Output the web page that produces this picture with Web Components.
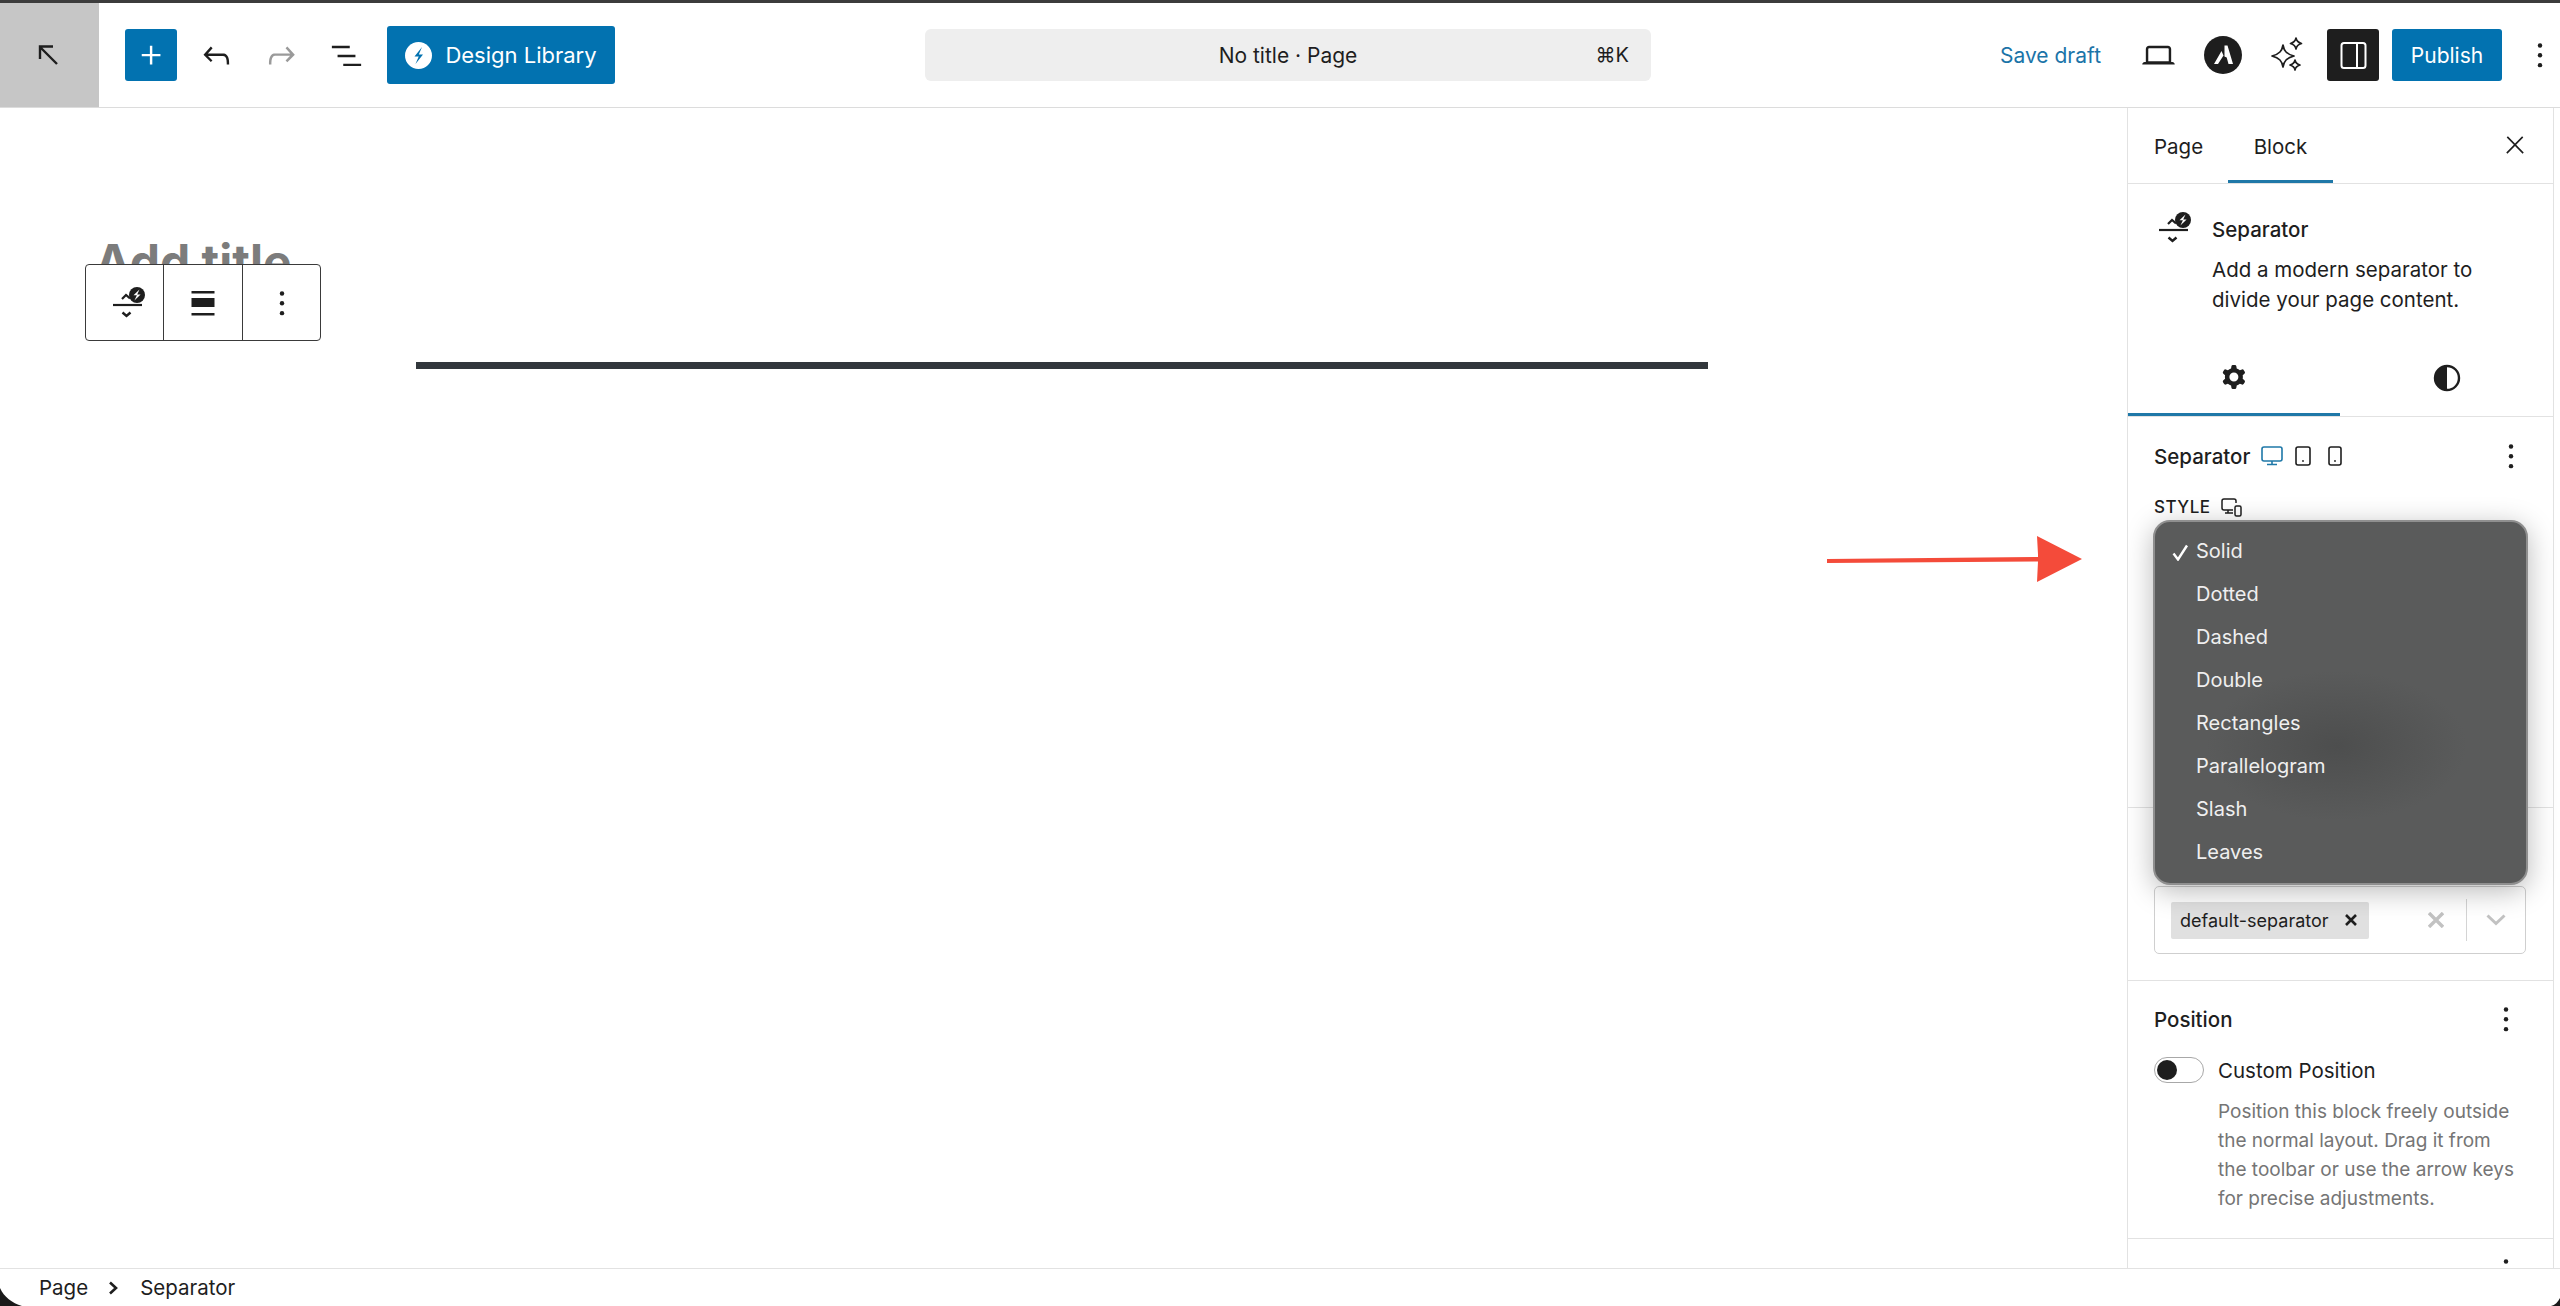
<!DOCTYPE html>
<html lang="en">
<head>
<meta charset="utf-8">
<title>No title - Page</title>
<style>
  html, body { margin: 0; padding: 0; background: #fff; }
  body { font-family: Inter, "Liberation Sans", sans-serif; color: #1e1e1e; }
</style>
</head>
<body>
<wp-editor></wp-editor>

<script>
/* ---------- iconos compartidos ---------- */
const PATHS = {
  plus: 'M11 12.5V17.5H12.5V12.5H17.5V11H12.5V6H11V11H6V12.5H11Z',
  undo: 'M18.3 11.7c-.6-.6-1.4-.9-2.3-.9H6.7l2.9-3.3-1.1-1-4.5 5L8.5 16l1-1-2.7-2.7H16c.5 0 .9.2 1.3.5 1 1 1 3.4 1 4.5v.3h1.5v-.2c0-1.5 0-4.3-1.5-5.7z',
  redo: 'M15.6 6.5l-1.1 1 2.9 3.3H8c-.9 0-1.7.3-2.3.9-1.4 1.5-1.4 4.2-1.4 5.6v.2h1.5v-.3c0-1.1 0-3.5 1-4.5.3-.3.7-.5 1.3-.5h9.2L14.5 15l1.1 1.1 4.6-4.6-4.6-5z',
  list: 'M3 6h11v1.5H3V6Zm3.5 5.5h11V13h-11v-1.5ZM21 17H10v1.5h11V17Z',
  close: 'M13 11.8l6.1-6.3-1-1-6.1 6.2-6.1-6.2-1 1 6.1 6.3-6.5 6.7 1 1 6.5-6.6 6.5 6.6 1-1z',
  laptop: 'M20.5 16h-.7V8c0-1.1-.9-2-2-2H6.2c-1.1 0-2 .9-2 2v8h-.7c-.8 0-1.5.7-1.5 1.5h20c0-.8-.7-1.5-1.5-1.5zM5.7 8c0-.3.2-.5.5-.5h11.6c.3 0 .5.2.5.5v7.6H5.7V8z',
  cog: 'M10.289 4.836A1 1 0 0 1 11.275 4h1.306a1 1 0 0 1 .987.836l.244 1.466c.787.26 1.503.679 2.108 1.218l1.393-.522a1 1 0 0 1 1.216.437l.653 1.13a1 1 0 0 1-.23 1.273l-1.148.944a6.025 6.025 0 0 1 0 2.435l1.149.946a1 1 0 0 1 .23 1.272l-.653 1.13a1 1 0 0 1-1.216.437l-1.394-.522c-.605.54-1.32.958-2.108 1.218l-.244 1.466a1 1 0 0 1-.987.836h-1.306a1 1 0 0 1-.986-.836l-.244-1.466a5.995 5.995 0 0 1-2.108-1.218l-1.394.522a1 1 0 0 1-1.217-.436l-.653-1.131a1 1 0 0 1 .23-1.272l1.149-.946a6.026 6.026 0 0 1 0-2.435l-1.148-.944a1 1 0 0 1-.23-1.272l.653-1.131a1 1 0 0 1 1.217-.437l1.393.522a5.994 5.994 0 0 1 2.108-1.218l.244-1.466ZM14.929 12a3 3 0 1 1-6 0 3 3 0 0 1 6 0Z'
};

const svgIcon = (name, size = 39, color = 'currentColor') =>
  `<svg width="${size}" height="${size}" viewBox="0 0 24 24" fill="${color}" fill-rule="evenodd" style="display:block"><path d="${PATHS[name]}"/></svg>`;

const dots = (size = 38) =>
  `<svg width="${size}" height="${size}" viewBox="0 0 24 24" fill="currentColor" style="display:block"><circle cx="12" cy="6" r="1.4"/><circle cx="12" cy="12.2" r="1.4"/><circle cx="12" cy="18.4" r="1.4"/></svg>`;

/* icono del bloque separador con el logo de stackable */
const separatorIcon = `<svg width="36" height="33" viewBox="0 0 36 33" fill="none" style="display:block">
  <path d="M1 19h29" stroke="#1e1e1e" stroke-width="2.2"/>
  <path d="M10 13l4-4 4 3.4" stroke="#1e1e1e" stroke-width="2.2"/>
  <path d="M10.500 26.500l4 3.500 4-3.500" stroke="#1e1e1e" stroke-width="2.400"/>
  <circle cx="25" cy="9" r="8" fill="#1e1e1e"/>
  <path d="M27.500 3.500l-6 5.800h3.400l-2.500 5.200 6.200-6h-3.400z" fill="#fff"/>
</svg>`;

/* ---------- boton cuadrado de la barra superior ---------- */
class IconButton extends HTMLElement {
  constructor() {
    super();
    this.attachShadow({ mode: 'open' });
  }

  connectedCallback() {
    this.shadowRoot.innerHTML = `
<style>
  :host {
    display: flex;
    align-items: center;
    justify-content: center;
    flex: 0 0 auto;
    width: 52px;
    height: 52px;
    border-radius: 3px;
    color: #1e1e1e;
    box-sizing: border-box;
  }
  :host([variant="primary"]) { background: #0272b0; color: #fff; }
  :host([variant="dark"]) { background: #1e1e1e; color: #fff; }
  :host([variant="muted"]) { color: #9a9a9a; }
  :host([narrow]) { width: 38px; }
</style>
<slot></slot>`;
  }
}
customElements.define('icon-button', IconButton);

/* ---------- boton azul con texto ---------- */
class TextButton extends HTMLElement {
  constructor() {
    super();
    this.attachShadow({ mode: 'open' });
  }

  connectedCallback() {
    this.shadowRoot.innerHTML = `
<style>
  :host {
    display: flex;
    align-items: center;
    justify-content: center;
    flex: 0 0 auto;
    gap: 13px;
    height: 52px;
    background: #0272b0;
    color: #fff;
    border-radius: 3px;
    font-size: 21px;
    box-sizing: border-box;
  }
</style>
<slot></slot>`;
  }
}
customElements.define('text-button', TextButton);

/* ---------- barra superior ---------- */
class TopBar extends HTMLElement {
  constructor() {
    super();
    this.attachShadow({ mode: 'open' });
  }

  connectedCallback() {
    this.shadowRoot.innerHTML = `
<style>
  :host {
    display: grid;
    grid-template-columns: 925px 726px 1fr;
    align-items: center;
    flex: 0 0 105px;
    height: 105px;
    background: #fff;
    border-bottom: 1px solid #dcdcdc;
    box-sizing: border-box;
    font-family: Inter, "Liberation Sans", sans-serif;
    font-size: 21px;
    color: #1e1e1e;
  }
  .left, .right { display: flex; align-items: center; gap: 13px; height: 100%; }
  .back {
    width: 99px;
    height: 100%;
    margin-right: 13px;
    background: #c6c6c6;
    display: flex;
    align-items: center;
    justify-content: center;
  }
  .library { width: 228px; height: 58px; margin-left: 2px; font-size: 22px; }
  .command {
    display: grid;
    grid-template-columns: 1fr auto 1fr;
    align-items: center;
    height: 52px;
    background: #eeeeee;
    border-radius: 6px;
    padding: 0 22px;
    font-size: 21px;
  }
  .command .kbd { justify-self: end; font-size: 20px; }
  .right { justify-content: flex-end; }
  .save { color: #1b74a8; margin-right: 18px; }
  .publish { width: 110px; }
  .more { margin-left: 6px; margin-right: 1px; }
</style>
<div class="left">
  <div class="back">
    <svg width="26" height="26" viewBox="0 0 26 26" fill="none" stroke="#1e1e1e" stroke-width="2.400" style="margin-left:-2px"><path d="M21 22L4 5M4 17V4.500h13"/></svg>
  </div>
  <icon-button variant="primary">${svgIcon('plus')}</icon-button>
  <icon-button>${svgIcon('undo')}</icon-button>
  <icon-button variant="muted">${svgIcon('redo')}</icon-button>
  <icon-button>${svgIcon('list')}</icon-button>
  <text-button class="library">
    <svg width="27" height="27" viewBox="0 0 27 27"><circle cx="13.500" cy="13.500" r="13.500" fill="#fff"/><path d="M17 5l-7.500 9.500h4.200L10.500 22l7.500-9.500h-4.200z" fill="#0272b0"/></svg>
    <span>Design Library</span>
  </text-button>
</div>
<div class="command">
  <span></span>
  <span>No title · Page</span>
  <span class="kbd">⌘K</span>
</div>
<div class="right">
  <span class="save">Save draft</span>
  <icon-button>${svgIcon('laptop')}</icon-button>
  <icon-button>
    <svg width="38" height="38" viewBox="0 0 38 38"><circle cx="19" cy="19" r="19" fill="#1e1e1e"/><path d="M20.500 9.500h3L29 28h-4.500l-1.800-6.500-2.200-1zM17.500 15l2 4.500L14 28H10z" fill="#fff"/></svg>
  </icon-button>
  <icon-button>
    <svg width="38" height="38" viewBox="0 0 38 38" fill="none" stroke="#1e1e1e" stroke-width="1.700" stroke-linejoin="round"><path d="M14 8c1 6 3.500 9 11 11-7.500 2-10 5-11 11-1-6-3.500-9-11-11 7.500-2 10-5 11-11z" transform="translate(0 1)"/><path d="M28 2c.5 3 2 4.500 5.500 5.500C30 8.500 28.500 10 28 13c-.5-3-2-4.500-5.500-5.500C26 6.500 27.500 5 28 2z" transform="translate(-1 0)"/><path d="M26 24c.5 3 1.500 4 5 5-3.500 1-4.500 2-5 5-.5-3-1.500-4-5-5 3.500-1 4.500-2 5-5z"/></svg>
  </icon-button>
  <icon-button variant="dark">
    <svg width="27" height="27" viewBox="0 0 27 27" fill="none" stroke="#fff" stroke-width="2"><rect x="1.500" y="1" width="24" height="25" rx="2.500"/><path d="M17 1v25"/></svg>
  </icon-button>
  <text-button class="publish">Publish</text-button>
  <icon-button narrow class="more">${dots()}</icon-button>
</div>`;
  }
}
customElements.define('top-bar', TopBar);

/* ---------- toolbar flotante del bloque ---------- */
class BlockToolbar extends HTMLElement {
  constructor() {
    super();
    this.attachShadow({ mode: 'open' });
  }

  connectedCallback() {
    this.shadowRoot.innerHTML = `
<style>
  :host {
    position: absolute;
    left: 85px;
    top: 156px;
    display: grid;
    grid-template-columns: 77px 79px 1fr;
    width: 236px;
    height: 77px;
    background: #fff;
    border: 1.5px solid #3a3a3a;
    border-radius: 4px;
    box-sizing: border-box;
    color: #1e1e1e;
  }
  div { display: flex; align-items: center; justify-content: center; }
  div + div { border-left: 1.5px solid #3a3a3a; }
  .ico { margin-left: 10px; }
</style>
<div><span class="ico">${separatorIcon}</span></div>
<div>
  <svg width="24" height="26" viewBox="0 0 24 26" fill="#1e1e1e"><rect x="0.500" y="1" width="23" height="2.500"/><rect x="0.500" y="8" width="23" height="9"/><rect x="0.500" y="23" width="23" height="2.500"/></svg>
</div>
<div>${dots()}</div>`;
  }
}
customElements.define('block-toolbar', BlockToolbar);

/* ---------- lienzo del editor ---------- */
class EditorCanvas extends HTMLElement {
  constructor() {
    super();
    this.attachShadow({ mode: 'open' });
  }

  connectedCallback() {
    this.shadowRoot.innerHTML = `
<style>
  :host {
    display: block;
    position: relative;
    flex: 1 1 auto;
    min-width: 0;
    background: #fff;
    overflow: hidden;
    font-family: Inter, "Liberation Sans", sans-serif;
  }
  h1 {
    margin: 126px 0 0 95px;
    font-size: 48px;
    line-height: 56px;
    font-weight: 700;
    color: #7c7c7c;
  }
  .line {
    width: 1292px;
    height: 7px;
    margin: 72px 0 0 416px;
    background: #32373c;
  }
</style>
<h1>Add title</h1>
<div class="line"></div>
<block-toolbar></block-toolbar>`;
  }
}
customElements.define('editor-canvas', EditorCanvas);

/* ---------- seccion del panel lateral ---------- */
class PanelSection extends HTMLElement {
  constructor() {
    super();
    this.attachShadow({ mode: 'open' });
  }

  connectedCallback() {
    const title = this.getAttribute('title-text');
    this.shadowRoot.innerHTML = `
<style>
  :host {
    display: block;
    flex: 0 0 auto;
    box-sizing: border-box;
    padding: var(--pad-top, 25px) var(--pad-right, 28px) 0 26px;
    border-bottom: 1px solid #e2e2e2;
    height: var(--section-height, auto);
  }
  .head {
    display: flex;
    align-items: center;
    justify-content: space-between;
    height: 30px;
    font-weight: 500;
    font-size: 20.500px;
  }
  .name { display: flex; align-items: center; gap: 11px; }
</style>
<div class="head">
  <div class="name">${title}<slot name="head"></slot></div>
  ${dots()}
</div>
<slot></slot>`;
  }
}
customElements.define('panel-section', PanelSection);

/* ---------- menu nativo abierto (select) ---------- */
class StyleMenu extends HTMLElement {
  constructor() {
    super();
    this.attachShadow({ mode: 'open' });
  }

  connectedCallback() {
    const items = ['Solid', 'Dotted', 'Dashed', 'Double', 'Rectangles', 'Parallelogram', 'Slash', 'Leaves'];
    this.shadowRoot.innerHTML = `
<style>
  :host {
    position: absolute;
    left: 25px;
    top: 412px;
    width: 375px;
    height: 365px;
    box-sizing: border-box;
    padding-top: 7px;
    border: 2px solid #8f8f8f;
    border-radius: 17px;
    background:
      radial-gradient(ellipse 130px 75px at 49% 62%, #4d4e4e, rgba(77,78,78,0)),
      #5a5b5b;
    box-shadow: 0 6px 28px rgba(0,0,0,.28);
    color: #efefef;
    font-size: 20px;
  }
  .item { display: flex; align-items: center; height: 43px; padding-left: 17px; }
  .check { width: 24px; flex: 0 0 24px; }
</style>
${items.map((item, i) => `
<div class="item">
  <span class="check">${i === 0 ? '<svg width="17" height="17" viewBox="0 0 17 17" fill="none" stroke="#fff" stroke-width="2.400" style="display:block;margin-top:4px"><path d="M1.500 9.500l4.500 6L15 1.500"/></svg>' : ''}</span>
  <span>${item}</span>
</div>`).join('')}`;
  }
}
customElements.define('style-menu', StyleMenu);

/* ---------- campo de clases con token ---------- */
class TokenField extends HTMLElement {
  constructor() {
    super();
    this.attachShadow({ mode: 'open' });
  }

  connectedCallback() {
    this.shadowRoot.innerHTML = `
<style>
  :host {
    display: flex;
    align-items: center;
    height: 68px;
    box-sizing: border-box;
    margin-top: 78px;
    padding: 0 19px 0 16px;
    border: 1px solid #cfcfcf;
    border-radius: 5px;
  }
  .tag {
    display: flex;
    align-items: center;
    justify-content: space-between;
    width: 198px;
    height: 37px;
    box-sizing: border-box;
    padding: 0 12px 0 9px;
    background: #e0e0e0;
    border-radius: 2px;
    font-size: 18px;
    white-space: nowrap;
  }
  .clear { margin-left: auto; }
  .sep { width: 1.500px; height: 42px; background: #d4d4d4; margin: 0 19px 0 22px; }
</style>
<div class="tag">
  <span>${this.getAttribute('value')}</span>
  <svg width="12" height="12" viewBox="0 0 12 12" stroke="#1e1e1e" stroke-width="2.600"><path d="M1 1l10 10M11 1L1 11"/></svg>
</div>
<svg class="clear" width="16" height="16" viewBox="0 0 16 16" stroke="#c2c2c2" stroke-width="3.400"><path d="M1 1l14 14M15 1L1 15"/></svg>
<div class="sep"></div>
<svg width="20" height="12" viewBox="0 0 20 12" fill="none" stroke="#c2c2c2" stroke-width="3"><path d="M1.500 1.500L10 9.500l8.500-8"/></svg>`;
  }
}
customElements.define('token-field', TokenField);

/* ---------- interruptor con su ayuda ---------- */
class ToggleField extends HTMLElement {
  constructor() {
    super();
    this.attachShadow({ mode: 'open' });
  }

  connectedCallback() {
    this.shadowRoot.innerHTML = `
<style>
  :host { display: block; margin-top: 21px; font-size: 20.500px; }
  .row { display: flex; align-items: center; gap: 14px; height: 30px; }
  .switch {
    width: 50px;
    height: 26px;
    box-sizing: border-box;
    border: 1.500px solid #a8a8a8;
    border-radius: 13px;
    display: flex;
    align-items: center;
    padding-left: 2px;
  }
  .knob { width: 20px; height: 20px; border-radius: 50%; background: #1e1e1e; }
  .help {
    margin: 11.500px 0 0 64px;
    font-size: 19px;
    line-height: 29px;
    color: #757575;
    white-space: nowrap;
  }
</style>
<div class="row">
  <div class="switch"><div class="knob"></div></div>
  <span>${this.getAttribute('label')}</span>
</div>
<div class="help"><slot></slot></div>`;
  }
}
customElements.define('toggle-field', ToggleField);

/* ---------- panel lateral ---------- */
class SidePanel extends HTMLElement {
  constructor() {
    super();
    this.attachShadow({ mode: 'open' });
  }

  connectedCallback() {
    this.shadowRoot.innerHTML = `
<style>
  :host {
    display: block;
    position: relative;
    flex: 0 0 433px;
    height: 100%;
    box-sizing: border-box;
    border-left: 1px solid #e2e2e2;
    overflow: hidden;
    background: #fff;
    font-size: 20.500px;
    color: #1e1e1e;
  }
  .inner {
    display: flex;
    flex-direction: column;
    width: 426px;
    height: 100%;
    box-sizing: border-box;
    border-right: 1px solid #e2e2e2;
  }
  .tabs {
    flex: 0 0 75px;
    box-sizing: border-box;
    display: flex;
    align-items: stretch;
    border-bottom: 1px solid #e2e2e2;
    padding-left: 26px;
    position: relative;
  }
  .tab { display: flex; align-items: center; padding-top: 2px; }
  .tab.page { width: 74px; }
  .tab.block {
    width: 105px;
    justify-content: center;
    border-bottom: 3px solid #1f78a8;
    height: 75px;
    padding-top: 4px;
    box-sizing: border-box;
  }
  .tabs .close { position: absolute; right: 24px; top: 23px; }
  .card {
    flex: 0 0 151px;
    box-sizing: border-box;
    display: grid;
    grid-template-columns: 54px 1fr;
    padding: 27px 0 0 30px;
  }
  .card h2 { margin: 4px 0 0; font-size: 20.500px; line-height: 30px; font-weight: 500; }
  .card p { margin: 10px 0 0; font-size: 20.500px; line-height: 30px; white-space: nowrap; }
  .modes {
    flex: 0 0 81px;
    box-sizing: border-box;
    display: grid;
    grid-template-columns: 212px 1fr;
    border-bottom: 1px solid #e2e2e2;
  }
  .modes div {
    display: flex;
    align-items: center;
    justify-content: center;
    padding-top: 5px;
    box-sizing: border-box;
    height: 81px;
  }
  .modes .on { border-bottom: 3px solid #1f78a8; }
  .devices { display: flex; align-items: center; gap: 11px; }
  .devices svg:last-child { margin-left: 4px; }
  .label {
    display: flex;
    align-items: center;
    gap: 10px;
    height: 30px;
    margin-top: 21px;
    font-size: 17px;
    font-weight: 500;
    letter-spacing: .5px;
  }
  .sep-section { --pad-top: 24px; --pad-right: 23px; --section-height: 391px; }
  .classes { flex: 0 0 173px; box-sizing: border-box; padding: 0 27px 0 26px; border-bottom: 1px solid #e2e2e2; }
  .pos-section { --pad-top: 23px; --pad-right: 28px; --section-height: 258px; }
  .next { --pad-top: 17px; --pad-right: 28px; }
</style>
<div class="inner">
  <div class="tabs">
    <div class="tab page">Page</div>
    <div class="tab block">Block</div>
    <div class="close">${svgIcon('close', 28)}</div>
  </div>
  <div class="card">
    ${separatorIcon}
    <div>
      <h2>Separator</h2>
      <p>Add a modern separator to<br>divide your page content.</p>
    </div>
  </div>
  <div class="modes">
    <div class="on">${svgIcon('cog', 36)}</div>
    <div>
      <svg width="28" height="28" viewBox="0 0 28 28"><circle cx="14" cy="14" r="12" fill="none" stroke="#1e1e1e" stroke-width="2.400"/><path d="M14 2a12 12 0 0 0 0 24z" fill="#1e1e1e"/></svg>
    </div>
  </div>
  <panel-section class="sep-section" title-text="Separator">
    <span slot="head" class="devices">
      <svg width="22" height="20" viewBox="0 0 22 20" fill="none" stroke="#1f78a8" stroke-width="1.600"><rect x="1" y="1" width="20" height="14" rx="2"/><path d="M11 15v3.500M6 18.500h10"/></svg>
      <svg width="18" height="20" viewBox="0 0 18 20" fill="none" stroke="#1e1e1e" stroke-width="1.600"><rect x="2" y="1" width="14" height="18" rx="2"/><circle cx="9" cy="15" r=".9" fill="#1e1e1e" stroke="none"/></svg>
      <svg width="16" height="20" viewBox="0 0 16 20" fill="none" stroke="#1e1e1e" stroke-width="1.600"><rect x="2" y="1" width="12" height="18" rx="2"/><circle cx="8" cy="15" r=".9" fill="#1e1e1e" stroke="none"/></svg>
    </span>
    <div class="label">
      <span>STYLE</span>
      <svg width="21" height="19" viewBox="0 0 21 19" fill="none" stroke="#1e1e1e" stroke-width="1.500"><path d="M12 12H3a2 2 0 0 1-2-2V3a2 2 0 0 1 2-2h10a2 2 0 0 1 2 2v2M7 12v3M4 15h8"/><rect x="14" y="8" width="6" height="10" rx="1.500"/></svg>
    </div>
  </panel-section>
  <div class="classes"><token-field value="default-separator"></token-field></div>
  <panel-section class="pos-section" title-text="Position">
    <toggle-field label="Custom Position">Position this block freely outside<br>the normal layout. Drag it from<br>the toolbar or use the arrow keys<br>for precise adjustments.</toggle-field>
  </panel-section>
  <panel-section class="next" title-text=""></panel-section>
</div>
<style-menu></style-menu>`;
  }
}
customElements.define('side-panel', SidePanel);

/* ---------- ruta inferior ---------- */
class BreadCrumb extends HTMLElement {
  constructor() {
    super();
    this.attachShadow({ mode: 'open' });
  }

  connectedCallback() {
    this.shadowRoot.innerHTML = `
<style>
  :host {
    display: flex;
    align-items: center;
    flex: 0 0 38px;
    box-sizing: border-box;
    padding-left: 39px;
    border-top: 1px solid #e2e2e2;
    background: #fff;
    font-size: 20.500px;
    color: #1e1e1e;
  }
  svg { margin: 0 22px 0 20px; }
</style>
<span>Page</span>
<svg width="10" height="14" viewBox="0 0 10 14" fill="none" stroke="#1e1e1e" stroke-width="2.600"><path d="M2 1.500L8 7l-6 5.500"/></svg>
<span>Separator</span>`;
  }
}
customElements.define('bread-crumb', BreadCrumb);

/* ---------- editor completo ---------- */
class WpEditor extends HTMLElement {
  constructor() {
    super();
    this.attachShadow({ mode: 'open' });
  }

  connectedCallback() {
    this.shadowRoot.innerHTML = `
<style>
  :host {
    display: flex;
    flex-direction: column;
    position: relative;
    width: 100%;
    height: 1306px;
    overflow: hidden;
    background: #fff;
    font-family: Inter, "Liberation Sans", sans-serif;
  }
  .strip { flex: 0 0 3px; background: #3c3c3c; }
  main { display: flex; flex: 1 1 0; min-height: 0; }
  /* flecha de anotacion encima de la captura */
  .arrow { position: absolute; left: 1820px; top: 530px; }
  .corner { position: absolute; bottom: 0; }
  .corner.l { left: 0; }
  .corner.r { right: 0; }
</style>
<div class="strip"></div>
<top-bar></top-bar>
<main>
  <editor-canvas></editor-canvas>
  <side-panel></side-panel>
</main>
<bread-crumb></bread-crumb>
<svg class="arrow" width="270" height="60" viewBox="0 0 270 60"><path d="M7 29L218 27v-2.500l-1-18.500 45 23-45 23 1-20.500L7 33z" fill="#f44b3a"/></svg>
<svg class="corner l" width="22" height="18" viewBox="0 0 22 18"><path d="M0 0C4 9 12 15 22 18H0z" fill="#1a1a1a"/></svg>
<svg class="corner r" width="9" height="8" viewBox="0 0 9 8"><path d="M9 0C7 4 4 7 0 8h9z" fill="#1a1a1a"/></svg>`;
  }
}
customElements.define('wp-editor', WpEditor);
</script>
</body>
</html>
